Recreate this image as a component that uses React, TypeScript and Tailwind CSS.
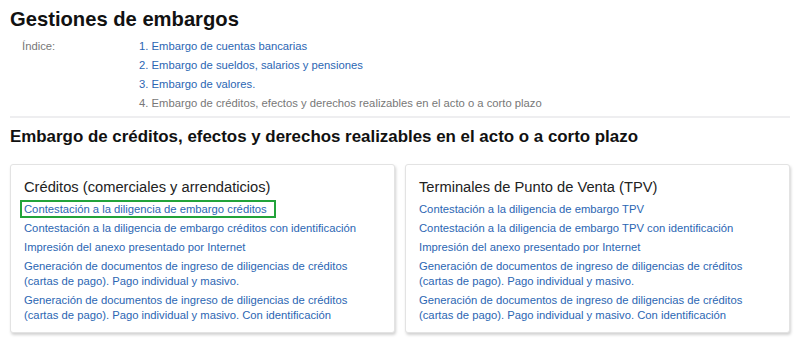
const indice = [
  { label: '1. Embargo de cuentas bancarias', active: true },
  { label: '2. Embargo de sueldos, salarios y pensiones', active: true },
  { label: '3. Embargo de valores.', active: true },
  { label: '4. Embargo de créditos, efectos y derechos realizables en el acto o a corto plazo', active: false },
];

const cards = [
  {
    title: 'Créditos (comerciales y arrendaticios)',
    links: [
      'Contestación a la diligencia de embargo créditos',
      'Contestación a la diligencia de embargo créditos con identificación',
      'Impresión del anexo presentado por Internet',
      'Generación de documentos de ingreso de diligencias de créditos (cartas de pago). Pago individual y masivo.',
      'Generación de documentos de ingreso de diligencias de créditos (cartas de pago). Pago individual y masivo. Con identificación',
    ],
    highlight: 0,
  },
  {
    title: 'Terminales de Punto de Venta (TPV)',
    links: [
      'Contestación a la diligencia de embargo TPV',
      'Contestación a la diligencia de embargo TPV con identificación',
      'Impresión del anexo presentado por Internet',
      'Generación de documentos de ingreso de diligencias de créditos (cartas de pago). Pago individual y masivo.',
      'Generación de documentos de ingreso de diligencias de créditos (cartas de pago). Pago individual y masivo. Con identificación',
    ],
    highlight: -1,
  },
];

export default function App() {
  return (
    <div className="w-[800px] h-[341px] overflow-hidden bg-white px-[10px] font-['Liberation_Sans',Arial,sans-serif]">
      <h1 className="pt-[6px] text-[20.2px] font-bold leading-[26px] text-[#111]">Gestiones de embargos</h1>

      <div className="mt-[5px] flex pl-[12px] text-[11.25px] leading-[19px]">
        <div className="w-[117px] text-[#777]">Índice:</div>
        <ul className="flex flex-col">
          {indice.map((item) => (
            <li key={item.label} className={item.active ? 'text-[#2b66b3]' : 'text-[#777]'}>
              {item.label}
            </li>
          ))}
        </ul>
      </div>

      <hr className="mt-[3px] border-t-2 border-[#eeeef0]" />

      <h2 className="mt-[9px] text-[16.9px] font-bold leading-[20px] text-[#111]">
        Embargo de créditos, efectos y derechos realizables en el acto o a corto plazo
      </h2>

      <div className="mt-[17px] grid grid-cols-2 gap-[10px]">
        {cards.map((card) => (
          <div
            key={card.title}
            className="h-[169px] rounded-[3px] border border-[#e3e3e3] bg-white px-[13px] pt-[13px] shadow-[1px_2px_3px_rgba(0,0,0,0.18)]"
          >
            <h3 className="text-[14.7px] leading-[18px] text-[#222]">{card.title}</h3>
            <ul className="mt-[6px] flex flex-col gap-[4px] text-[11.25px] leading-[15px] text-[#2b66b3]">
              {card.links.map((link, i) => (
                <li key={link}>
                  <span className="relative">
                    {link}
                    {i === card.highlight && (
                      <span className="absolute -left-[4px] -right-[9px] -top-[3px] -bottom-[3px] border-2 border-[#22a33a]" />
                    )}
                  </span>
                </li>
              ))}
            </ul>
          </div>
        ))}
      </div>
    </div>
  );
}
